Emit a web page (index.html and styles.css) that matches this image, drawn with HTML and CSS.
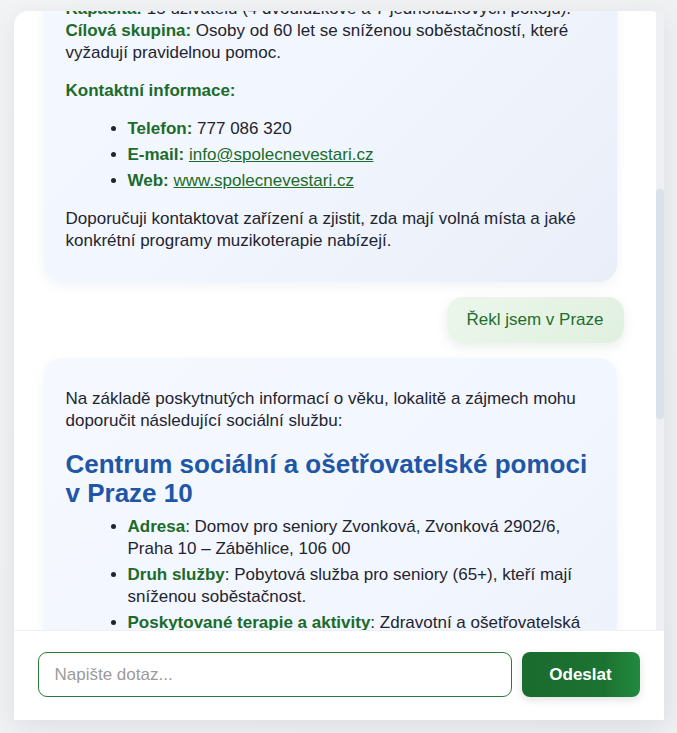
FILE: index.html
```html
<!DOCTYPE html>
<html lang="cs">
<head>
<meta charset="utf-8">
<title>Asistent sociálních služeb</title>
<link rel="stylesheet" href="styles.css">
</head>
<body>
<main class="chat">
  <div class="chat-body">
    <section class="messages" id="messages">
      <div class="msg bot">
        <p>Dobrý den! Jsem virtuální asistent pro vyhledávání sociálních služeb. Napište mi, kolik je vám let, kde bydlíte a o jaké aktivity máte zájem.</p>
      </div>
      <div class="msg user">Je mi 72 let a mám rád hudbu</div>
      <div class="msg bot">
        <p>Děkuji. Podle vašeho zájmu o hudbu vám mohu doporučit zařízení, které nabízí muzikoterapii:</p>
        <h2>Společně ve stáří, z.&nbsp;s. – domov se zvláštním režimem</h2>
        <ul>
          <li><span class="label">Adresa:</span> Praha 4 – Modřany</li>
          <li><span class="label">Druh služby:</span> Pobytová služba</li>
          <li><span class="label">Aktivity:</span> muzikoterapie, zpěv, tanec.</li>
        </ul>
        <p><span class="label">Kapacita:</span> 15 uživatelů (4 dvoulůžkové a 7 jednolůžkových pokojů).<br><span class="label">Cílová skupina:</span> Osoby od 60 let se sníženou soběstačností, které vyžadují pravidelnou pomoc.</p>
        <p class="label">Kontaktní informace:</p>
        <ul>
          <li><span class="label">Telefon:</span> 777 086 320</li>
          <li><span class="label">E-mail:</span> <a href="#">info@spolecnevestari.cz</a></li>
          <li><span class="label">Web:</span> <a href="#">www.spolecnevestari.cz</a></li>
        </ul>
        <p>Doporučuji kontaktovat zařízení a zjistit, zda mají volná místa a jaké konkrétní programy muzikoterapie nabízejí.</p>
      </div>
      <div class="msg user" id="anchor">Řekl jsem v Praze</div>
      <div class="msg bot">
        <p>Na základě poskytnutých informací o věku, lokalitě a zájmech mohu doporučit následující sociální službu:</p>
        <h2>Centrum sociální a ošetřovatelské pomoci v Praze 10</h2>
        <ul>
          <li><span class="label">Adresa</span>: Domov pro seniory Zvonková, Zvonková 2902/6, Praha 10 – Záběhlice, 106 00</li>
          <li><span class="label">Druh služby</span>: Pobytová služba pro seniory (65+), kteří mají sníženou soběstačnost.</li>
          <li><span class="label">Poskytované terapie a aktivity</span>: Zdravotní a ošetřovatelská péče, muzikoterapie, ergoterapie, fyzioterapie a volnočasové aktivity.</li>
          <li><span class="label">Cílová skupina</span>: Senioři od 65 let.</li>
          <li><span class="label">Kapacita</span>: 150 lůžek.</li>
          <li><span class="label">Telefon</span>: 267 184 111</li>
          <li><span class="label">Web</span>: <a href="#">www.csop10.cz</a></li>
        </ul>
        <p>Doporučuji se předem informovat o aktuální dostupnosti míst a o podmínkách přijetí.</p>
      </div>
      <div class="msg user">Děkuji, to mi pomohlo</div>
      <div class="msg bot">
        <p>Rádo se stalo. Pokud budete potřebovat pomoc s vyplněním žádosti o přijetí nebo budete chtít najít další služby ve vašem okolí, stačí napsat.</p>
        <p>Při výběru zařízení se vyplatí domluvit si osobní návštěvu a prohlédnout si prostředí.</p>
        <p>Přeji vám hezký den a hodně radosti s hudbou.</p>
      </div>
    </section>
    <div class="scrollbar" aria-hidden="true"><div class="scrollbar-thumb" id="thumb"></div></div>
  </div>
  <form class="composer">
    <input class="composer-input" type="text" placeholder="Napište dotaz..." autofocus>
    <button class="composer-send" type="button">Odeslat</button>
  </form>
</main>
<script src="script.js"></script>
</body>
</html>
```
FILE: styles.css
```css
* { box-sizing: border-box; }

body {
  margin: 0;
  min-height: 100vh;
  background: linear-gradient(135deg, #f2f3f4 0%, #eceef0 100%);
  font-family: "Liberation Sans", Arial, sans-serif;
  color: #1f2530;
}

.chat {
  width: 650px;
  height: 709px;
  margin: 11px auto 0;
  background: #fff;
  border-radius: 14px;
  box-shadow: 0 6px 24px rgba(30, 40, 60, 0.08);
  display: flex;
  flex-direction: column;
}

.chat-body {
  flex: 1;
  min-height: 0;
  display: flex;
}

.messages {
  position: relative;
  flex: 1;
  min-width: 0;
  overflow-y: auto;
  scrollbar-width: none;
  padding: 36px 32px 24px 30px;
  display: flex;
  flex-direction: column;
  gap: 15px;
}

.messages::-webkit-scrollbar { display: none; }

.scrollbar {
  position: relative;
  flex: none;
  width: 8px;
  background: #eef0f3;
}

.scrollbar-thumb {
  position: absolute;
  left: 0;
  right: 0;
  border-radius: 4px;
  background: #dae1ea;
}

.msg {
  flex: none;
  font-size: 17px;
  line-height: 22px;
}

.bot {
  align-self: stretch;
  margin-right: 7px;
  padding: 14px 22px;
  border-radius: 18px;
  background: linear-gradient(135deg, #f5f8ff 0%, #f2f6fe 55%, #e9eef8 100%);
  box-shadow: 0 4px 12px rgba(40, 60, 110, 0.06);
}

.bot p { margin: 16px 0; }

.bot h2 {
  margin: 18px 0 8px;
  font-size: 26px;
  line-height: 29px;
  color: #1f56a6;
}

.bot ul {
  margin: 16px 0;
  padding-left: 62px;
}

.bot h2 + ul { margin-top: 8px; }

.bot li + li { margin-top: 4px; }

.label {
  color: #1b6b2a;
  font-weight: bold;
}

.bot a { color: #1b6b2a; }

.user {
  align-self: flex-end;
  padding: 12px 20px;
  border-radius: 16px;
  background: linear-gradient(135deg, #ebf7eb 0%, #e0f0e0 100%);
  color: #1e6e2e;
  box-shadow: 0 4px 12px rgba(40, 100, 50, 0.1);
}

.composer {
  flex: none;
  height: 90px;
  display: flex;
  align-items: flex-start;
  gap: 10px;
  padding: 21px 24px 0;
  border-top: 1px solid #eef0f5;
  background: #fff;
}

.composer-input {
  flex: 1;
  height: 45px;
  padding: 0 16px;
  border: 1px solid #2b7a3a;
  border-radius: 9px;
  font: 17px "Liberation Sans", Arial, sans-serif;
  color: #222;
  caret-color: #3b82f6;
  outline: none;
}

.composer-input::placeholder { color: #9b9b9b; }

.composer-send {
  width: 118px;
  height: 45px;
  border: 0;
  border-radius: 8px;
  background: linear-gradient(90deg, #1a6b2e 0%, #1c7331 70%, #22893f 100%);
  color: #fff;
  font: bold 17px "Liberation Sans", Arial, sans-serif;
  box-shadow: 0 3px 8px rgba(0, 0, 0, 0.12);
}
```
FILE: script.js
```js
const box = document.getElementById('messages');
const anchor = document.getElementById('anchor');
const thumb = document.getElementById('thumb');

function syncThumb() {
  const view = box.clientHeight;
  const total = box.scrollHeight;
  const size = Math.max(24, (view * view) / total);
  const range = total - view;
  const top = range > 0 ? (box.scrollTop / range) * (view - size) : 0;
  thumb.style.height = size + 'px';
  thumb.style.top = top + 'px';
}

box.scrollTop = anchor.offsetTop - 286;
syncThumb();
box.addEventListener('scroll', syncThumb);
```
